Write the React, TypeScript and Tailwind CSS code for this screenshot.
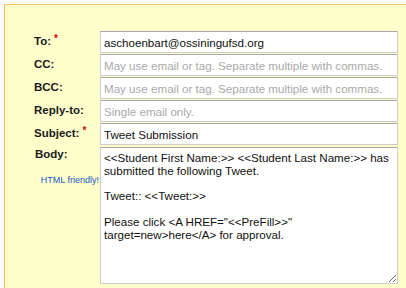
import React from "react";

const font = { fontFamily: '"Liberation Sans", Arial, Helvetica, sans-serif' };

function Label({ text, req }: { text: string; req?: boolean }) {
  return (
    <div className="w-[95px] shrink-0 pl-[29px] pt-[3px] text-[11.5px] leading-[14px] font-bold text-[#1a1a1a]">
      {text}
      {req && <span className="relative -top-[3px] ml-[3px] text-[10px] text-[#e00000]">*</span>}
    </div>
  );
}

function Field({ value, placeholder }: { value?: string; placeholder?: string }) {
  return (
    <input
      readOnly
      defaultValue={value}
      placeholder={placeholder}
      className="w-[298px] h-[22px] shrink-0 border border-[#cdcdcd] border-t-[#a8a8a8] bg-white px-[3px] text-[11.6px] text-[#111] placeholder:text-[#a9a9a9] outline-none"
      style={font}
    />
  );
}

const bodyText =
  '<<Student First Name:>> <<Student Last Name:>> has\nsubmitted the following Tweet.\n\nTweet:: <<Tweet:>>\n\nPlease click <A HREF="<<PreFill>>"\ntarget=new>here</A> for approval.';

export default function App() {
  return (
    <div className="w-[406px] h-[288px] bg-white pt-[4px] pl-[4px] overflow-hidden" style={font}>
      <div className="h-[284px] border-t border-l border-[#f5c062] bg-[#ffffcc] pt-[26px]">
        <div className="flex flex-col gap-[1px]">
          <div className="flex">
            <Label text="To:" req />
            <Field value="aschoenbart@ossiningufsd.org" />
          </div>
          <div className="flex">
            <Label text="CC:" />
            <Field placeholder="May use email or tag. Separate multiple with commas." />
          </div>
          <div className="flex">
            <Label text="BCC:" />
            <Field placeholder="May use email or tag. Separate multiple with commas." />
          </div>
          <div className="flex">
            <Label text="Reply-to:" />
            <Field placeholder="Single email only." />
          </div>
          <div className="flex">
            <Label text="Subject:" req />
            <Field value="Tweet Submission" />
          </div>
        </div>
        <div className="flex mt-[2px]">
          <div className="w-[95px] shrink-0 flex flex-col">
            <div className="pl-[30px] text-[11.5px] leading-[14px] font-bold text-[#1a1a1a]">Body:</div>
            <div className="mt-[14px] pr-[1px] text-right text-[9px] leading-[11px] text-[#1a56c8]">HTML friendly!</div>
          </div>
          <textarea
            readOnly
            wrap="off"
            defaultValue={bodyText}
            className="w-[298px] h-[137px] shrink-0 border border-[#cdcdcd] border-t-[#a8a8a8] bg-white px-[3px] pt-[4px] text-[11.6px] leading-[12.8px] text-[#111] outline-none overflow-hidden resize"
            style={font}
          />
        </div>
      </div>
    </div>
  );
}
